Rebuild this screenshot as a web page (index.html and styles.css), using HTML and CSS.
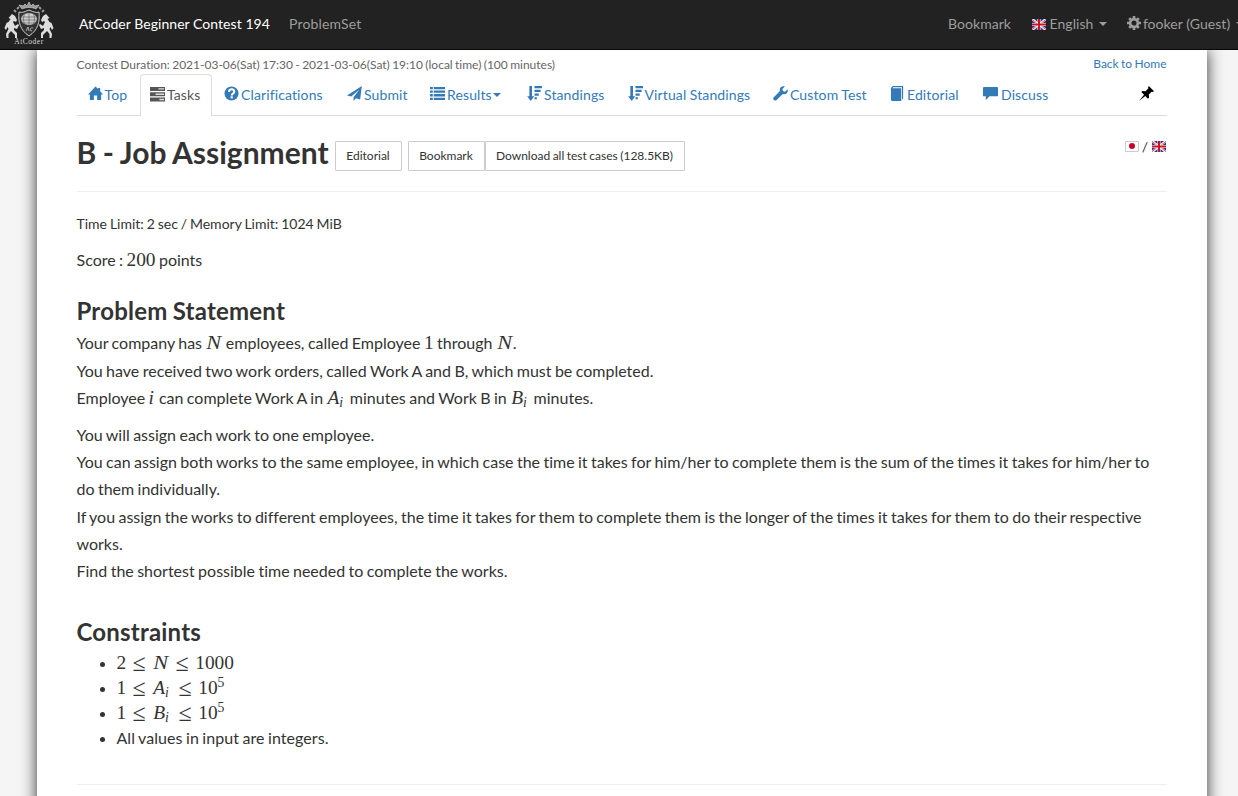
FILE: index.html
```
<!DOCTYPE html>
<html lang="en">
<head>
<meta charset="utf-8">
<title>B - Job Assignment</title>
<link rel="stylesheet" href="styles.css">
</head>
<body>
<svg class="defs" width="0" height="0">
  <symbol id="uk" viewBox="0 0 14 11"><path fill="#fff" d="M0 0h14v11H0z"/><path fill="#293f8e" d="M2 0h3.500v3zM8.500 0H12L8.500 3zM0 1.300L3.300 4H0zM14 1.300V4h-3.300zM0 7h3.300L0 9.700zM10.700 7H14v2.700zM5.500 8v3H2zM8.500 8l3.500 3H8.500z"/><path stroke="#d8343f" stroke-width=".8" d="M0 .3l4.500 3.500M14 .3L9.500 3.800M0 10.700l4.500-3.500M14 10.700L9.500 7.200"/><path fill="#cf1020" d="M6 0h2v11H6zM0 4.500h14v2H0z"/></symbol>
</svg>
<nav class="navbar">
  <svg class="logo" viewBox="0 0 50 46">
    <g fill="none" stroke="#ccc" stroke-width="1">
      <path d="M15 11c3 1 5 0 10-2 5 2 7 3 10 2 1 10-1 18-10 24C16 29 14 21 15 11z" fill="#333"/>
      <ellipse cx="25" cy="18" rx="8" ry="6" fill="#ccc" stroke="none"/>
      <path stroke="#555" stroke-width=".6" d="M17 16h16M17 19h16M18 22h14M25 11v14M21 12c-2 4-2 8 0 12M29 12c2 4 2 8 0 12"/>
      <path d="M22 30l2-4 1 4M29 27c-3-1-4 3-1 3" stroke-width=".8"/>
      <path d="M18 8l-3-4 4 1 2-2 2 2 2-4 2 4 2-2 2 2 4-1-3 4c-4-2-10-2-14 0z" fill="#999" stroke-width=".7"/>
      <path d="M12 11l-2-2M38 11l2-2M13 8l2-2M37 8l-2-2" stroke="#999" stroke-width="2"/>
    </g>
    <g id="horse" fill="#ddd"><path d="M8 13l3 2 2 4-1 2-2-1-1 1 2 4 3-2 1 1-2 4-3-1 0 2 3 3 0 5-2 0 0-3-4-4-2.500 3 0 4-2 0-.5-4 2.500-5-1-2-1.500 3-1.500-2 2-5 2-1 2-3-2-1z"/></g>
    <use href="#horse" transform="matrix(-1 0 0 1 50 0)"/>
    <text x="25" y="43" class="logo-text">AtCoder</text>
  </svg>
  <span class="nav-title">AtCoder Beginner Contest 194</span>
  <span class="nav-problems">ProblemSet</span>
  <div class="nav-right">
    <span>Bookmark</span>
    <span class="nav-item lang"><svg class="flag"><use href="#uk"/></svg>English<i class="caret"></i></span>
    <span class="nav-item user"><svg class="gear" viewBox="0 0 16 16"><g stroke="#9d9d9d" stroke-width="3"><path d="M8 0v4M8 12v4M0 8h4M12 8h4M2.500 2.500l2.500 2.500M11 11l2.500 2.500M13.500 2.500L11 5M5 11l-2.500 2.500"/><circle cx="8" cy="8" r="4.400" fill="none"/></g></svg>fooker (Guest)<i class="caret"></i></span>
  </div>
</nav>
<main class="page">
  <div class="info"><span>Contest Duration: 2021-03-06(Sat) 17:30 - 2021-03-06(Sat) 19:10 (local time) (100 minutes)</span><a class="home">Back to Home</a></div>
  <ul class="tabs">
    <li class="t-top"><svg class="ic" viewBox="0 0 16 16"><path d="M8 .5l2.800 2.800V2H13v3.500L16 9h-2v6H9.700v-5H6.300v5H2V9H0z"/></svg>Top</li>
    <li class="t-tasks active"><svg class="ic" viewBox="0 0 16 16"><path d="M0 0h16v4.300H0zM0 5.600h16v4.300H0zM0 11.200h16v4.300H0z"/><path fill="#ddd" d="M9 1.200h6v1.500H9zM6 7h9v1.500H6zM10 12.500h5V14h-5z"/></svg>Tasks</li>
    <li class="t-clar"><svg class="ic" viewBox="0 0 16 16"><circle cx="8" cy="8" r="7.500"/><path d="M5.300 6.300c0-4 5.600-3.500 5.600-.3C10.900 8 8.300 8 8.300 10" fill="none" stroke="#fff" stroke-width="2.200"/><path fill="#fff" d="M7 11h2.400v2.200H7z"/></svg>Clarifications</li>
    <li class="t-submit"><svg class="ic" viewBox="0 0 16 16"><path d="M15.800 0L0 10l4.500 1.200L13 4l-6 8v4l2.500-3 4.500 1.500z"/></svg>Submit</li>
    <li class="t-results"><svg class="ic" viewBox="0 0 16 16"><path d="M0 1h3v2.500H0zM4 1h12v2.500H4zM0 4.800h3v2.500H0zM4 4.800h12v2.500H4zM0 8.600h3v2.500H0zM4 8.600h12v2.500H4zM0 12.500h3V15H0zM4 12.500h12V15H4z"/></svg>Results<i class="caret"></i></li>
    <li class="t-stand"><svg class="ic" viewBox="0 0 16 16"><path id="sort" d="M2.500 0h2.800v11h2.400L4 16 .2 11h2.300zM8 0h8v2.500H8zM8 4h6.500v2.500H8zM8 8h4.500v2.300H8zM8 12h2.500v2H8z"/></svg>Standings</li>
    <li class="t-virt"><svg class="ic" viewBox="0 0 16 16"><use href="#sort"/></svg>Virtual Standings</li>
    <li class="t-custom"><svg class="ic" viewBox="0 0 16 16"><path d="M15.500 3.500L12.700 6 10.500 5.200 10 3.300 12.700.6C9.500-.8 6.500 2 7.400 5.400L.6 12.200c-1.300 2 1 4.200 3 3l6.800-6.700C14 9.500 16.700 6.700 15.500 3.500z"/></svg>Custom Test</li>
    <li class="t-edit"><svg class="ic" viewBox="0 0 16 16"><path d="M1 2L3 0h11v13l-1.200 2V1.300H3.500l-1 1H12V16H2l-1-1z"/></svg>Editorial</li>
    <li class="t-discuss"><svg class="ic" viewBox="0 0 16 16"><path d="M1 1h14q1 0 1 1v8q0 1-1 1H7l-4 4v-4H1q-1 0-1-1V2q0-1 1-1z"/></svg>Discuss</li>
    <li class="pin"><svg class="ic" viewBox="0 0 16 16"><path d="M10.500 0L16 5.500l-1.500.8-1-.3-3 3 .2 3.500L9.500 13.500 6.700 10.600 0 16l5.400-6.700L2.500 6.500l1-1.200 3.500.2 3-3-.3-1z"/></svg></li>
  </ul>
  <header class="title">
    <h1>B - Job Assignment</h1>
    <button class="b-edit">Editorial</button><button class="b-mark">Bookmark</button><button class="b-down">Download all test cases (128.5KB)</button>
    <div class="langs"><svg class="flag" viewBox="0 0 14 11"><path d="M.5.500h13v10H.5z" fill="#fff" stroke="#ccc"/><circle cx="7" cy="5" r="3" fill="#c8002c"/></svg><span>/</span><svg class="flag"><use href="#uk"/></svg></div>
  </header>
  <p class="limits">Time Limit: 2 sec / Memory Limit: 1024 MiB</p>
  <section class="statement">
    <p class="score">Score : <span class="m">200</span> points</p>
    <h3>Problem Statement</h3>
    <p class="first">Your company has <span class="m v n">N</span> employees, called Employee <span class="m">1</span> through <span class="m v n">N</span>.<br>
    You have received two work orders, called Work A and B, which must be completed.<br>
    Employee <span class="m v i">i</span> can complete Work A in <span class="m v a">A<sub>i</sub></span> minutes and Work B in <span class="m v a">B<sub>i</sub></span> minutes.</p>
    <p>You will assign each work to one employee.<br>
    You can assign both works to the same employee, in which case the time it takes for him/her to complete them is the sum of the times it takes for him/her to do them individually.<br>
    If you assign the works to different employees, the time it takes for them to complete them is the longer of the times it takes for them to do their respective works.<br>
    Find the shortest possible time needed to complete the works.</p>
    <h3 class="second">Constraints</h3>
    <ul class="limits-list">
      <li><span class="m">2<b>≤</b><span class="v n">N</span><b>≤</b>1000</span></li>
      <li><span class="m">1<b>≤</b><span class="v a">A<sub>i</sub></span><b>≤</b>10<sup>5</sup></span></li>
      <li><span class="m">1<b>≤</b><span class="v a">B<sub>i</sub></span><b>≤</b>10<sup>5</sup></span></li>
      <li>All values in input are integers.</li>
    </ul>
    <hr>
  </section>
</main>
</body>
</html>
```
FILE: styles.css
```
* { box-sizing: border-box; }
body { margin: 0; height: 796px; overflow: hidden; background: #f5f5f5; color: #333; font: 14px/20px Lato, sans-serif; word-spacing: -.05em; font-variant-ligatures: none; }
.defs { position: absolute; }
.navbar { position: relative; z-index: 1; display: flex; align-items: center; height: 50px; padding: 0 0 1px 4px; background: #222; border-bottom: 1px solid #080808; color: #9d9d9d; white-space: nowrap; word-spacing: 0; letter-spacing: .05px; }
.logo { width: 50px; height: 46px; flex: none; overflow: visible; }
.logo-text { font: 7.500px "Liberation Serif", serif; letter-spacing: .5px; fill: #ddd; text-anchor: middle; }
.nav-title { color: #fff; margin-left: 25px; width: 210px; }
.nav-problems { flex: 1; letter-spacing: .15px; }
.nav-right { display: flex; width: 290px; flex: none; }
.nav-item { display: flex; align-items: center; }
.lang { margin-left: 20.500px; }
.user { margin-left: 20px; }
.flag { width: 14px; height: 11px; flex: none; }
.lang .flag { margin-right: 4px; }
.gear { width: 14px; height: 14px; margin: -2px 2px 0 0; flex: none; }
.caret { display: inline-block; flex: none; border: 4px solid transparent; border-top-color: currentColor; border-bottom: 0; }
.nav-item .caret { margin-left: 5.500px; }
.page { width: 1170px; height: 780px; margin: 0 auto 0 36.500px; padding: 0 40px; background: #fff; box-shadow: 0 0 15px #333; }
.info { display: flex; justify-content: space-between; height: 24px; padding-top: 5px; font-size: 12px; line-height: 20px; color: #666; }
.info span { word-spacing: -.06em; }
.home { color: #337ab7; line-height: 18px; }
.tabs { display: flex; height: 42px; margin: 0; padding: 0; list-style: none; border-bottom: 1px solid #ddd; color: #337ab7; white-space: nowrap; word-spacing: -.3px; letter-spacing: .12px; }
.tabs li { display: flex; align-items: center; height: 42px; padding: 0 0 1px 11px; }
.ic { width: 15px; height: 15px; margin: -2px 2px 0 0; fill: currentColor; flex: none; }
.tabs .active { border: 1px solid #ddd; border-bottom: 0; border-radius: 4px 4px 0 0; background: #fff; color: #555; padding-left: 9px; }
.t-top { width: 63.500px; }
.t-tasks { width: 72px; }
.tabs .t-clar { width: 124px; padding-left: 12px; }
.t-submit { width: 83px; }
.t-results { width: 97px; }
.t-results .caret { margin-left: 1.500px; }
.t-stand { width: 100.500px; }
.t-virt { width: 145.500px; }
.t-custom { width: 117px; }
.t-edit { width: 93px; }
.t-discuss { width: 100px; }
.tabs .t-discuss .ic { margin-right: 3px; }
.tabs .pin { margin-left: auto; padding: 0 11px 2px 0; color: #000; }
.title { display: flex; align-items: flex-start; height: 76px; border-bottom: 1px solid #eee; padding-top: 25px; }
h1 { margin: -5px 0 0; width: 258px; font-size: 30px; line-height: 33px; white-space: nowrap; }
button { height: 30px; padding: 0 0 2px; border: 1px solid #ccc; border-radius: 1px; background: #fff; color: #333; font: 12px Lato, sans-serif; font-variant-ligatures: none; word-spacing: -.05em; }
.b-edit { width: 67px; margin-right: 6px; }
.b-mark { width: 77px; }
.b-down { width: 200px; }
.langs { display: flex; margin-left: auto; padding-right: 1px; font-size: 14px; line-height: 11px; }
.langs span { width: 13px; text-align: center; }
.limits { margin: 22px 0 0; font-size: 14px; line-height: 20px; }
.statement { font-size: 16px; line-height: 27.200px; }
.statement p { margin: 0 0 10px; }
.statement .score { margin: 12px 0 24px; }
h3 { margin: 0; font-size: 24px; line-height: 28px; letter-spacing: .2px; }
.statement .first { margin-top: 4.200px; }
.second { margin-top: 33.300px; }
.m { display: inline-block; font-family: "Liberation Serif", serif; font-size: 19.400px; line-height: 20px; white-space: nowrap; }
.v { display: inline-block; font-style: italic; }
.n { width: 17px; text-indent: 1px; transform: scaleX(1.15); transform-origin: left; }
.i { width: 7px; }
.a { width: 20px; text-indent: 1px; }
.m b { display: inline-block; width: 26px; text-align: center; text-indent: 0; font: 24px/20px "Liberation Serif", serif; vertical-align: -2px; }
.m sub, .m sup { font-size: 13.700px; line-height: 0; }
.m sub { vertical-align: -3px; }
.m sup { vertical-align: 7px; }
.limits-list { margin: 4.500px 0 33.500px; padding-left: 40px; }
.limits-list li { height: 25px; line-height: 25px; }
.limits-list li:last-child { letter-spacing: .06px; }
hr { margin: 0; border: 0; border-top: 1px solid #eee; }
```
